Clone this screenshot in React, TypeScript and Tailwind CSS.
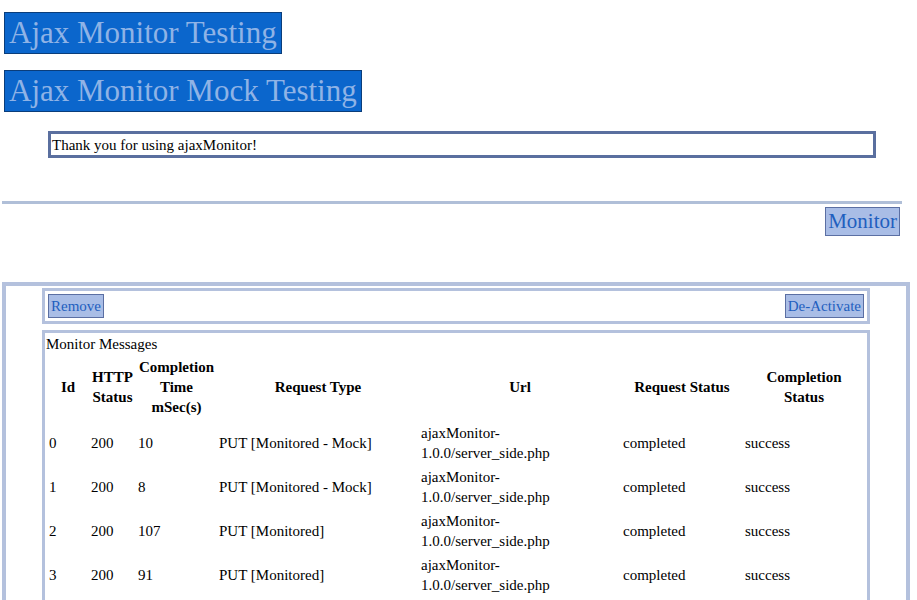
import React from 'react';

interface Row {
    id: string;
    http: string;
    ms: string;
    type: string;
    status: string;
    result: string;
}

const rows: Row[] = [
    { id: '0', http: '200', ms: '10', type: 'PUT [Monitored - Mock]', status: 'completed', result: 'success' },
    { id: '1', http: '200', ms: '8', type: 'PUT [Monitored - Mock]', status: 'completed', result: 'success' },
    { id: '2', http: '200', ms: '107', type: 'PUT [Monitored]', status: 'completed', result: 'success' },
    { id: '3', http: '200', ms: '91', type: 'PUT [Monitored]', status: 'completed', result: 'success' },
];

const Heading: React.FC<{ children: React.ReactNode }> = ({ children }) => (
    <div className="flex">
        <h1 className="h-[42px] border border-[#0a3d7a] bg-[#0b66cc] px-[4px] text-[31px] leading-[40px] text-[#8fb3e6] font-normal">
            {children}
        </h1>
    </div>
);

const Btn: React.FC<{ children: React.ReactNode }> = ({ children }) => (
    <button className="h-[24px] border border-[#5b6fa3] bg-[#a9bde6] px-[2px] text-[15px] leading-[22px] text-[#1f5fbf]">
        {children}
    </button>
);

const App: React.FC = () => {
    return (
        <div className="min-h-screen bg-white pl-[2px] text-black font-[family-name:Liberation_Serif] text-[15px]">
            {/* Titles */}
            <div className="pl-[2px] pt-[12px]">
                <Heading>Ajax Monitor Testing</Heading>
                <div className="h-[16px]" />
                <Heading>Ajax Monitor Mock Testing</Heading>
            </div>

            {/* Notice */}
            <div className="ml-[46px] mt-[19px] w-[828px] border-[3px] border-[#5a6f9f] px-[1px] pt-[1px] leading-[20px]">
                Thank you for using ajaxMonitor!
            </div>

            <div className="mt-[43px] h-[3px] w-[900px] bg-[#b0bfd8]" />

            <div className="mt-[3px] flex w-[898px] justify-end">
                <button className="h-[29px] border border-[#5b6fa3] bg-[#a9bde6] px-[2px] text-[21px] leading-[27px] text-[#1f5fbf]">
                    Monitor
                </button>
            </div>

            {/* Monitor panel */}
            <div className="mt-[46px] w-[908px] border-x-4 border-t-4 border-[#b4c1dd] pl-[36px] pt-[2px]">
                <div className="flex h-[36px] w-[828px] items-center justify-between border-[3px] border-[#b4c1dd] px-[3px]">
                    <Btn>Remove</Btn>
                    <Btn>De-Activate</Btn>
                </div>

                <div className="mt-[6px] w-[828px] border-x-[3px] border-t-[3px] border-[#b4c1dd] pb-[20px] pl-[1px]">
                    <div className="leading-[22px]">Monitor Messages</div>
                    <table className="w-[820px] table-fixed border-separate border-spacing-[2px]">
                        <colgroup>
                            <col className="w-[40px]" />
                            <col className="w-[45px]" />
                            <col className="w-[79px]" />
                            <col className="w-[200px]" />
                            <col className="w-[200px]" />
                            <col className="w-[120px]" />
                            <col className="w-[120px]" />
                        </colgroup>
                        <thead>
                            <tr className="font-bold leading-[20px]">
                                <th className="px-[1px] pt-0 pb-[3px] align-middle">Id</th>
                                <th className="px-[1px] pt-0 pb-[3px] align-middle">HTTP<br />Status</th>
                                <th className="px-[1px] pt-0 pb-[3px] align-middle">Completion<br />Time<br />mSec(s)</th>
                                <th className="px-[1px] pt-0 pb-[3px] align-middle">Request Type</th>
                                <th className="px-[1px] pt-0 pb-[3px] align-middle">Url</th>
                                <th className="px-[1px] pt-0 pb-[3px] align-middle">Request Status</th>
                                <th className="px-[1px] pt-0 pb-[3px] align-middle">Completion<br />Status</th>
                            </tr>
                        </thead>
                        <tbody>
                            {rows.map((r) => (
                                <tr key={r.id} className="leading-[20px]">
                                    <td className="p-[1px] align-middle">{r.id}</td>
                                    <td className="p-[1px] align-middle">{r.http}</td>
                                    <td className="p-[1px] align-middle">{r.ms}</td>
                                    <td className="p-[1px] align-middle">{r.type}</td>
                                    <td className="p-[1px] align-middle">ajaxMonitor-<br />1.0.0/server_side.php</td>
                                    <td className="p-[1px] align-middle">{r.status}</td>
                                    <td className="p-[1px] align-middle">{r.result}</td>
                                </tr>
                            ))}
                        </tbody>
                    </table>
                </div>
            </div>
        </div>
    );
};

export default App;
